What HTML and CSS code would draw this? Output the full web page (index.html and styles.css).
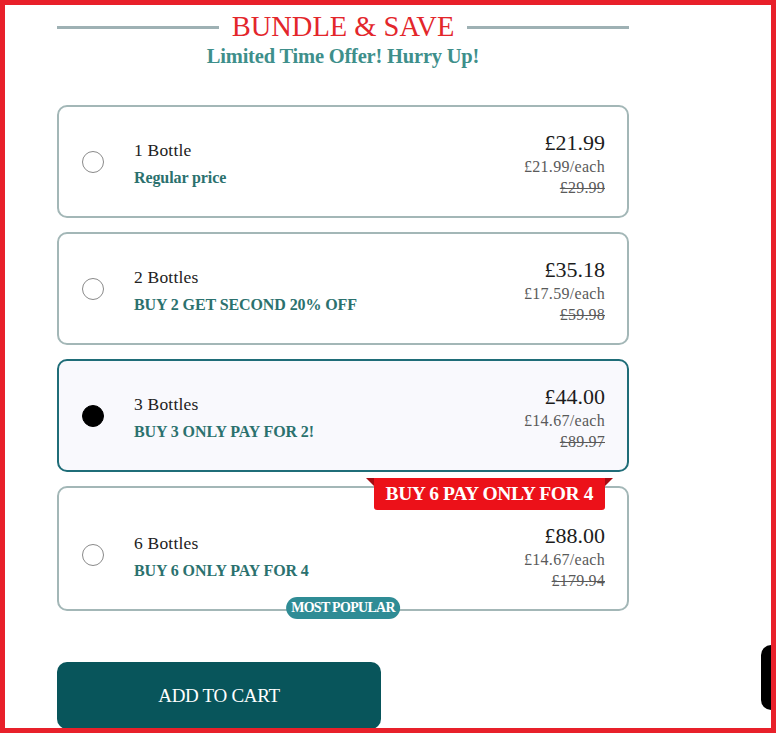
FILE: index.html
```html
<!DOCTYPE html>
<html lang="en">
<head>
<meta charset="utf-8">
<title>Bundle &amp; Save</title>
<link rel="stylesheet" href="styles.css">
</head>
<body>
<div class="frame">
  <div class="content">
    <div class="heading">
      <span class="line"></span>
      <h1 class="title">BUNDLE &amp; SAVE</h1>
      <span class="line"></span>
    </div>
    <p class="subtitle">Limited Time Offer! Hurry Up!</p>

    <div class="options">
      <label class="option">
        <span class="radio"></span>
        <span class="info">
          <span class="qty">1 Bottle</span>
          <span class="deal">Regular price</span>
        </span>
        <span class="prices">
          <span class="price">£21.99</span>
          <span class="each">£21.99/each</span>
          <span class="old">£29.99</span>
        </span>
      </label>

      <label class="option">
        <span class="radio"></span>
        <span class="info">
          <span class="qty">2 Bottles</span>
          <span class="deal">BUY 2 GET SECOND 20% OFF</span>
        </span>
        <span class="prices">
          <span class="price">£35.18</span>
          <span class="each">£17.59/each</span>
          <span class="old">£59.98</span>
        </span>
      </label>

      <label class="option selected">
        <span class="radio"></span>
        <span class="info">
          <span class="qty">3 Bottles</span>
          <span class="deal">BUY 3 ONLY PAY FOR 2!</span>
        </span>
        <span class="prices">
          <span class="price">£44.00</span>
          <span class="each">£14.67/each</span>
          <span class="old">£89.97</span>
        </span>
      </label>

      <label class="option featured">
        <span class="ribbon">BUY 6 PAY ONLY FOR 4</span>
        <span class="radio"></span>
        <span class="info">
          <span class="qty">6 Bottles</span>
          <span class="deal">BUY 6 ONLY PAY FOR 4</span>
        </span>
        <span class="prices">
          <span class="price">£88.00</span>
          <span class="each">£14.67/each</span>
          <span class="old">£179.94</span>
        </span>
        <span class="popular">MOST POPULAR</span>
      </label>
    </div>

    <button class="cart" type="button">ADD TO CART</button>
  </div>
  <div class="chat"></div>
</div>
</body>
</html>
```

FILE: styles.css
```css
* { box-sizing: border-box; }

html, body {
  margin: 0;
  padding: 0;
  background: #ffffff;
}

body {
  font-family: "Liberation Serif", "Times New Roman", serif;
  color: #222222;
}

.frame {
  position: relative;
  height: 733px;
  border: 5px solid #e8202a;
  overflow: hidden;
}

.content {
  width: 572px;
  margin-left: 52px;
  padding-top: 9px;
}

.heading {
  display: flex;
  align-items: center;
  gap: 13px;
}

.line {
  flex: 1;
  height: 3px;
  background: #9eb1b4;
}

.title {
  margin: 0;
  font-size: 28.5px;
  font-weight: normal;
  line-height: 26px;
  color: #e3262b;
}

.subtitle {
  margin: 4px 0 0;
  text-align: center;
  font-size: 20.5px;
  font-weight: bold;
  line-height: 24px;
  color: #3e8f8b;
  letter-spacing: -0.2px;
}

.options {
  margin-top: 37px;
  display: flex;
  flex-direction: column;
  gap: 14px;
}

.option {
  position: relative;
  display: flex;
  align-items: center;
  height: 113px;
  padding: 0 22px 0 23px;
  border: 2px solid #a3b7b7;
  border-radius: 10px;
  background: #ffffff;
}

.option.selected {
  border-color: #1f6d78;
  background: #f9f9fd;
}

.option.featured {
  height: 125px;
  padding-top: 12px;
}

.radio {
  flex: none;
  width: 22px;
  height: 22px;
  border: 1px solid #8a8a8a;
  border-radius: 50%;
  background: #ffffff;
}

.selected .radio {
  border-color: #000000;
  background: #000000;
}

.info {
  flex: 1;
  display: flex;
  flex-direction: column;
  gap: 6px;
  margin-left: 30px;
  padding-top: 4px;
}

.qty {
  font-size: 17.5px;
  line-height: 22px;
  color: #222222;
  letter-spacing: 0.2px;
}

.deal {
  font-size: 16px;
  font-weight: bold;
  line-height: 22px;
  color: #2b716e;
  letter-spacing: -0.1px;
}

.prices {
  display: flex;
  flex-direction: column;
  align-items: flex-end;
  padding-top: 4px;
}

.price {
  font-size: 22px;
  line-height: 26px;
  color: #1c1c1c;
}

.each {
  font-size: 16px;
  line-height: 21px;
  color: #5a5a5a;
  letter-spacing: 0.3px;
}

.old {
  font-size: 16px;
  line-height: 21px;
  color: #5a5a5a;
  text-decoration: line-through;
  letter-spacing: 0.2px;
}

.ribbon {
  position: absolute;
  top: -10px;
  right: 22px;
  height: 32px;
  padding: 0 12px;
  display: flex;
  align-items: center;
  background: #ec1119;
  color: #ffffff;
  font-size: 19.5px;
  font-weight: bold;
  border-radius: 0 0 3px 3px;
  letter-spacing: -0.4px;
}

.ribbon::before,
.ribbon::after {
  content: "";
  position: absolute;
  top: 0;
  width: 0;
  height: 0;
  border-style: solid;
}

.ribbon::before {
  left: -8px;
  border-width: 0 8px 8px 0;
  border-color: transparent #a80c12 transparent transparent;
}

.ribbon::after {
  right: -8px;
  border-width: 0 0 8px 8px;
  border-color: transparent transparent transparent #a80c12;
}

.popular {
  position: absolute;
  bottom: -10px;
  left: 50%;
  transform: translateX(-50%);
  height: 22px;
  padding: 0 5px;
  display: flex;
  align-items: center;
  background: #2f8c95;
  color: #ffffff;
  border-radius: 11px;
  font-size: 14px;
  font-weight: bold;
  letter-spacing: -0.7px;
  white-space: nowrap;
}

.cart {
  display: block;
  margin-top: 51px;
  width: 324px;
  height: 67px;
  border: none;
  border-radius: 10px;
  background: #08555b;
  color: #ffffff;
  font-family: "Liberation Serif", "Times New Roman", serif;
  font-size: 19px;
  letter-spacing: -0.3px;
  cursor: pointer;
}

.chat {
  position: absolute;
  right: 0;
  top: 640px;
  width: 10px;
  height: 65px;
  background: #000000;
  border-radius: 12px 0 0 12px;
}
```
